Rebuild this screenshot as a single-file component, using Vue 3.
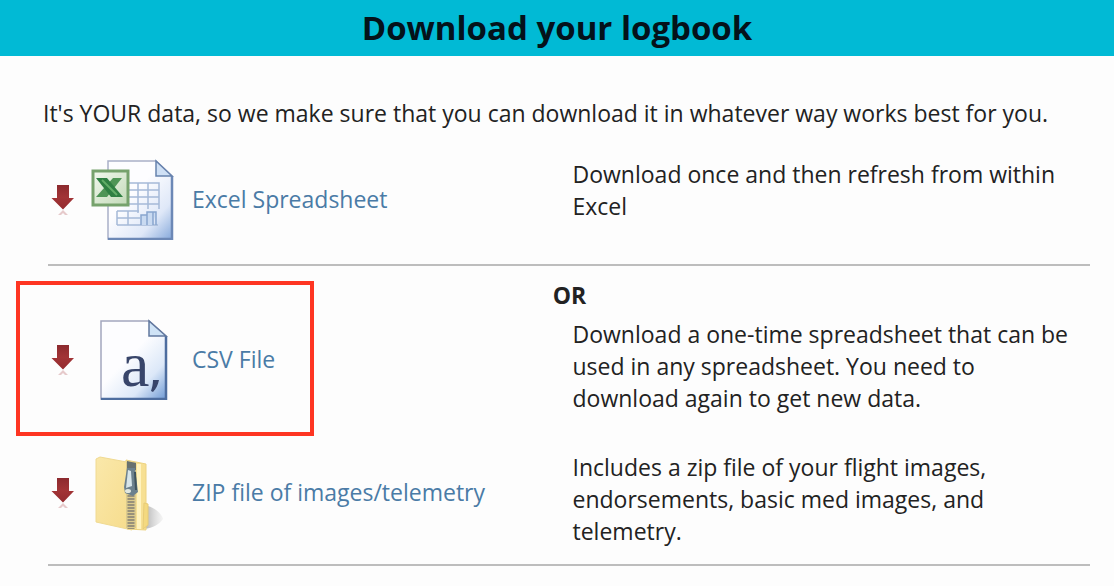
<script setup>
const options = [
  {
    id: 'excel',
    label: 'Excel Spreadsheet',
    text: 'Download once and then refresh from within Excel',
  },
  {
    id: 'csv',
    label: 'CSV File',
    text: 'Download a one-time spreadsheet that can be used in any spreadsheet. You need to download again to get new data.',
    marked: true,
  },
  {
    id: 'zip',
    label: 'ZIP file of images/telemetry',
    text: 'Includes a zip file of your flight images, endorsements, basic med images, and telemetry.',
  },
]
</script>

<template>
  <div class="page">
    <header class="banner">
      <h1>Download your logbook</h1>
    </header>
    <main>
      <p class="intro">It's YOUR data, so we make sure that you can download it in whatever way works best for you.</p>
      <template v-for="option in options" :key="option.id">
        <section class="option" :class="option.id">
          <a class="link" href="#">
            <svg class="arrow" viewBox="0 0 24 32" aria-hidden="true">
              <defs>
                <linearGradient :id="option.id + '-arrow'" x1="0" y1="0" x2="0" y2="1">
                  <stop offset="0" stop-color="#8c2a2e" />
                  <stop offset="0.5" stop-color="#a23436" />
                  <stop offset="1" stop-color="#942b2f" />
                </linearGradient>
              </defs>
              <path d="M6 2h12v13h5L12 26.500 0.500 15H6z" :fill="`url(#${option.id}-arrow)`" />
              <path d="M12 27l5 5h-3l-2-2-2 2H7z" fill="#a23436" opacity="0.25" />
            </svg>

            <svg v-if="option.id === 'excel'" class="file" viewBox="0 0 86 82" aria-hidden="true">
              <defs>
                <linearGradient id="sheet" x1="0.2" y1="0.1" x2="1" y2="1">
                  <stop offset="0.3" stop-color="#fdfdff" />
                  <stop offset="0.7" stop-color="#dfe8f8" />
                  <stop offset="1" stop-color="#86a9db" />
                </linearGradient>
                <linearGradient id="badge" x1="0" y1="0" x2="1" y2="1">
                  <stop offset="0" stop-color="#f2f8ee" />
                  <stop offset="1" stop-color="#c3dab8" />
                </linearGradient>
              </defs>
              <path d="M18 3h48l16 15v63H18z" fill="url(#sheet)" stroke="#a9b0c8" stroke-width="1.500" />
              <path d="M82 18v63H18" fill="none" stroke="#6c88b6" stroke-width="2.500" />
              <path d="M66 3v15h16z" fill="#cfe0f5" stroke="#6782ad" stroke-width="1.500" />
              <path d="M39 25h30v26M39 32h30M39 39h30M39 46h30M48 25v30M58 25v26M27 53h22M27 60h23M27 67h41M27 53v14M38 53v14" fill="none" stroke="#a5b9d8" stroke-width="1.500" />
              <path d="M51 67V57h6v10M57 67V54h6v13M63 54h3v13" fill="#c9daf1" stroke="#88a5ce" stroke-width="1.500" />
              <rect x="3" y="13" width="35" height="34" fill="url(#badge)" stroke="#76a26c" stroke-width="3" />
              <path d="M23 20h9L17 39H6z" fill="#4f9556" />
              <path d="M6 20h11l16 19H21z" fill="#2f7f42" />
              <path d="M12 22l15 15" stroke="#62ad67" stroke-width="2" />
            </svg>

            <svg v-else-if="option.id === 'csv'" class="file" viewBox="0 0 86 82" aria-hidden="true">
              <defs>
                <linearGradient id="paper" x1="0.2" y1="0.1" x2="1" y2="1">
                  <stop offset="0.35" stop-color="#fdfdff" />
                  <stop offset="0.7" stop-color="#dce8f8" />
                  <stop offset="1" stop-color="#6f9ad4" />
                </linearGradient>
              </defs>
              <path d="M11 3h48l17 15v63H11z" fill="url(#paper)" stroke="#a3a6be" stroke-width="1.500" />
              <path d="M76 18v63H11" fill="none" stroke="#4d6d9f" stroke-width="2.500" />
              <path d="M59 3v15h17z" fill="#cfe3f6" stroke="#61789f" stroke-width="1.500" />
              <text x="31" y="68" class="letter">a</text>
              <path d="M63 62h6c-1 5-3 9-6 12l-2-1c1-3 2-7 2-11z" fill="#38456a" />
            </svg>

            <svg v-else class="file" viewBox="0 0 86 82" aria-hidden="true">
              <defs>
                <linearGradient id="folder" x1="0" y1="0" x2="1" y2="1">
                  <stop offset="0" stop-color="#fae8aa" />
                  <stop offset="1" stop-color="#f6dc8c" />
                </linearGradient>
                <linearGradient id="shade" x1="0" y1="0" x2="1" y2="0">
                  <stop offset="0" stop-color="#8c8c8c" stop-opacity="0.7" />
                  <stop offset="1" stop-color="#c4c4c4" stop-opacity="0.15" />
                </linearGradient>
              </defs>
              <path d="M54 54c8 1 17 7 19 14-3 5-10 9-19 10z" fill="url(#shade)" />
              <path d="M36 9l20 4v66l-19-1z" fill="#f7e093" stroke="#edd382" />
              <path d="M54 52l4 1v21l-5 4z" fill="#f4d980" stroke="#e8cc76" />
              <path d="M6 8l4-2 32 6v67L6 71z" fill="url(#folder)" stroke="#f0da92" />
              <path d="M47 13h4v65h-4z" fill="#fff3bf" />
              <path d="M36 11h10v66H36z" fill="#dccb8d" />
              <path d="M41 44v34" stroke="#98917a" stroke-width="7" stroke-dasharray="2 1" />
              <path d="M37 10l9 2v7h-9z" fill="#68716f" />
              <path d="M37 17h8l3 24-5 4-8-3-1-6z" fill="#6c818d" />
              <path d="M38 19l3 1 1 15-6 2z" fill="#d7e5e9" />
              <path d="M45 21l1 18" stroke="#3f535d" stroke-width="2" />
              <ellipse cx="38" cy="40" rx="3" ry="2" fill="#e2e8df" />
            </svg>
            <span>{{ option.label }}</span>
          </a>
          <p class="text">{{ option.text }}</p>
          <div v-if="option.marked" class="mark"></div>
        </section>
        <hr v-if="option.id !== 'csv'" />
        <p v-if="option.id === 'excel'" class="or">OR</p>
      </template>
    </main>
  </div>
</template>

<style>
body {
  margin: 0;
  background: #fdfdfd;
}
</style>

<style scoped>
.page {
  font-family: "Open Sans", "Noto Sans", sans-serif;
  font-size: 23px;
  line-height: 32px;
  color: #222;
}
.banner {
  background: #01bad5;
  padding: 8px 16px;
  text-align: center;
}
h1 {
  margin: 0;
  font-size: 33px;
  line-height: 40px;
  font-weight: 700;
  color: #04121a;
}
main {
  padding: 41px 24px 0 43px;
}
p {
  margin: 0;
}
.intro {
  margin-bottom: 29px;
}
.option {
  position: relative;
  display: grid;
  grid-template-columns: minmax(0, 1fr) minmax(0, 1fr);
  column-gap: 12px;
  align-items: start;
}
.link {
  display: flex;
  align-items: center;
  padding-left: 8px;
  color: #4a7ba6;
  text-decoration: none;
}
.arrow {
  width: 24px;
  height: 32px;
  margin-right: 15px;
  flex: none;
}
.file {
  width: 86px;
  height: 82px;
  margin-right: 16px;
  flex: none;
}
.letter {
  font-family: "Liberation Serif", serif;
  font-size: 64px;
  fill: #38456a;
}
.text {
  padding-right: 12px;
}
.excel {
  min-height: 106px;
}
.csv {
  margin-bottom: 37px;
}
.zip {
  min-height: 113px;
}
hr {
  height: 2px;
  margin: 0 0 0 5px;
  border: 0;
  background: #bdbdbd;
}
.or {
  margin: 13px 0 7px;
  padding-left: 6px;
  text-align: center;
  font-weight: 700;
}
.mark {
  position: absolute;
  left: -27px;
  top: -37px;
  width: 290px;
  height: 147px;
  border: 4px solid #fe3522;
  pointer-events: none;
}
</style>
